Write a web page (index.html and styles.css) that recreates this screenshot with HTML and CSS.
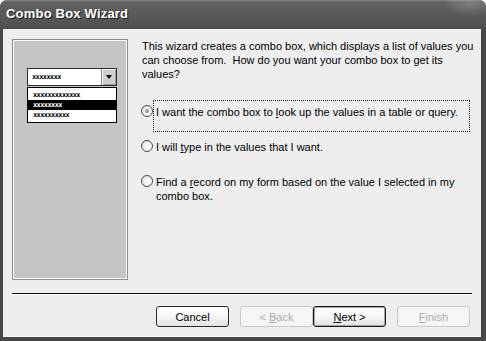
FILE: index.html
```html
<!DOCTYPE html>
<html>
  <head>
    <meta charset="UTF-8">
    <title>Combo Box Wizard</title>
    <link rel="stylesheet" href="styles.css">
  </head>
  <body>
    <div class="window">
      <!-- title bar -->
      <div class="titlebar">Combo Box Wizard</div>
      <div class="client">
        <div class="main">
          <!-- left preview picture -->
          <div class="preview">
            <div class="combo">
              <span class="combo-value dummy">xxxxxxxx</span>
              <span class="combo-btn"><span class="arrow"></span></span>
            </div>
            <div class="combo-list">
              <div class="row dummy">xxxxxxxxxxxxx</div>
              <div class="row dummy selected">xxxxxxxx</div>
              <div class="row dummy">xxxxxxxxxx</div>
            </div>
          </div>
          <!-- question and options -->
          <div class="content">
            <p class="intro">This wizard creates a combo box, which displays a list of values you can choose from.&nbsp; How do you want your combo box to get its values?</p>
            <div class="options">
              <div class="option">
                <span class="radio checked"></span>
                <span class="label focused">I want the combo box to <u>l</u>ook up the values in a table or query.</span>
              </div>
              <div class="option">
                <span class="radio"></span>
                <span class="label">I will <u>t</u>ype in the values that I want.</span>
              </div>
              <div class="option">
                <span class="radio"></span>
                <span class="label">Find a <u>r</u>ecord on my form based on the value I selected in my combo box.</span>
              </div>
            </div>
          </div>
        </div>
        <div class="separator"></div>
        <div class="buttons">
          <button class="btn btn-cancel">Cancel</button>
          <button class="btn btn-back" disabled>&lt; <u>B</u>ack</button>
          <button class="btn btn-next default"><u>N</u>ext &gt;</button>
          <button class="btn" disabled><u>F</u>inish</button>
        </div>
      </div>
    </div>
  </body>
</html>
```

FILE: styles.css
```css
/* reset */
html,body{margin:0;padding:0;}
body{width:486px;height:341px;overflow:hidden;background:#fff;font-family:'Liberation Sans',Arial,sans-serif;font-size:11px;color:#000;}

/* window frame */
.window{display:flex;flex-direction:column;width:486px;height:341px;box-sizing:border-box;background:#474747;border-radius:7px 7px 0 0;overflow:hidden;}
.titlebar{flex:none;height:29px;box-sizing:border-box;padding:6px 0 0 6px;color:#fff;font-weight:bold;font-size:13px;letter-spacing:0.2px;text-shadow:1px 1px 0 #1e1e1e;
  background:radial-gradient(ellipse 40px 18px at 470px 4px,rgba(255,255,255,0.18),rgba(255,255,255,0) 70%),linear-gradient(#8a8a8a 0,#626262 2px,#5a5a5a 40%,#535353 80%,#4c4c4c 100%);}
.client{flex:1;display:flex;flex-direction:column;margin:0 5px 4px 3px;background:#eeeeee;border-bottom:1px solid #fafafa;}

/* top part */
.main{display:flex;padding:10px 0 0 9px;}
.preview{flex:none;width:116px;height:241px;box-sizing:border-box;border:1px solid #8e8e8e;box-shadow:inset 0 0 0 1px #fdfdfd;background:#c4c4c4;padding:28px 0 0 14px;}

/* little combo box picture */
.combo{display:flex;width:90px;height:18px;box-sizing:border-box;border:1px solid #2e2e2e;background:#fff;}
.combo-value{flex:1;padding:3px 0 0 4px;}
.combo-btn{display:flex;align-items:center;justify-content:center;width:14px;background:#cfcfcf;border-left:1px solid #8a8a8a;box-shadow:inset 1px 1px 0 #f4f4f4,inset -1px -1px 0 #9a9a9a;}
.arrow{width:0;height:0;border-left:3px solid transparent;border-right:3px solid transparent;border-top:4px solid #000;}
.combo-list{width:90px;margin-top:1px;box-sizing:border-box;border:1px solid #000;background:#fff;padding:2px 0;}
.row{height:10px;line-height:10px;padding-left:5px;}
.row.selected{background:#000;color:#fff;}
.dummy{font-family:'DejaVu Sans Mono',monospace;font-size:7px;font-weight:bold;line-height:10px;letter-spacing:-0.6px;white-space:nowrap;}

/* question text */
.content{flex:none;width:338px;margin-left:14px;}
.intro{margin:0;line-height:14px;}
.options{margin-top:19px;}
.option{display:flex;align-items:flex-start;height:32px;margin:0 10px 3px 0;}
.radio{flex:none;position:relative;width:12px;height:12px;box-sizing:border-box;margin:5px 0 0 -1px;border:1px solid #4a4a4a;border-radius:50%;background:radial-gradient(circle at 65% 65%,#ffffff 0,#f2f2f2 45%,#d6d6d6 100%);}
.radio.checked::after{content:'';position:absolute;left:3px;top:3px;width:4px;height:4px;border-radius:50%;background:radial-gradient(circle at 40% 40%,#b8b8b8,#6e6e6e);}
.label{flex:1;height:32px;box-sizing:border-box;padding:4px 2px 0 2px;line-height:14px;border:1px solid transparent;}
.label.focused{border:1px dotted #222;}

/* bottom buttons */
.separator{height:1px;margin:13px 9px 0 9px;background:#111;box-shadow:0 1px 0 #fff;}
.buttons{display:flex;justify-content:flex-end;margin-top:12px;padding-right:11px;}
.btn{width:73px;height:21px;padding:0;margin:0;font-family:inherit;font-size:11px;color:#000;border:1px solid #2c2c2c;border-radius:3px;background:linear-gradient(#ffffff,#f3f3f3 60%,#e2e2e2);}
.btn-cancel{margin-right:11px;}
.btn-next{margin-right:11px;}
.btn.default{border-color:#1a1a1a;box-shadow:inset 0 0 0 1px #a4a4a4;}
.btn:disabled{color:#ababab;border-color:#cacaca;background:#f5f5f5;}
```
